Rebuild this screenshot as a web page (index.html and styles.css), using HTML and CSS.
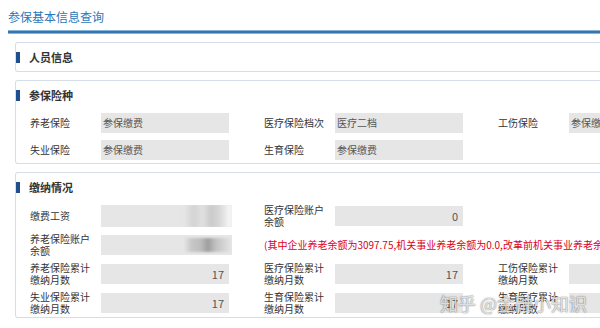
FILE: index.html
```html
<!DOCTYPE html>
<html lang="zh">
<head>
<meta charset="utf-8">
<link rel="stylesheet" href="styles.css">
</head>
<body>
<div class="page">
  <div class="page-title">参保基本信息查询</div>
  <div class="title-line"></div>

  <div class="panel panel-first">
    <div class="panel-head"><span class="marker"></span>人员信息</div>
  </div>

  <div class="panel">
    <div class="panel-head"><span class="marker"></span>参保险种</div>
    <div class="row">
      <div class="field"><span class="label">养老保险</span><span class="input">参保缴费</span></div>
      <div class="field"><span class="label">医疗保险档次</span><span class="input">医疗二档</span></div>
      <div class="field"><span class="label">工伤保险</span><span class="input">参保缴费</span></div>
    </div>
    <div class="row">
      <div class="field"><span class="label">失业保险</span><span class="input">参保缴费</span></div>
      <div class="field"><span class="label">生育保险</span><span class="input">参保缴费</span></div>
    </div>
  </div>

  <div class="panel">
    <div class="panel-head"><span class="marker"></span>缴纳情况</div>
    <div class="row tall">
      <div class="field"><span class="label">缴费工资</span><span class="input wide tallbox blurred"><span class="blur b1"></span></span></div>
      <div class="field"><span class="label two">医疗保险账户<br>余额</span><span class="input num">0</span></div>
    </div>
    <div class="row tall">
      <div class="field"><span class="label two">养老保险账户<br>余额</span><span class="input wide blurred"><span class="blur b2"></span></span></div>
      <div class="note">(其中企业养老余额为3097.75,机关事业养老余额为0.0,改革前机关事业养老余额为0.0)</div>
    </div>
    <div class="row tall">
      <div class="field"><span class="label two">养老保险累计<br>缴纳月数</span><span class="input num">17</span></div>
      <div class="field"><span class="label two">医疗保险累计<br>缴纳月数</span><span class="input num">17</span></div>
      <div class="field"><span class="label two">工伤保险累计<br>缴纳月数</span><span class="input num">17</span></div>
    </div>
    <div class="row tall">
      <div class="field"><span class="label two">失业保险累计<br>缴纳月数</span><span class="input num">17</span></div>
      <div class="field"><span class="label two">生育保险累计<br>缴纳月数</span><span class="input num">17</span></div>
      <div class="field"><span class="label two">生育医疗累计<br>缴纳月数</span><span class="input num"></span></div>
    </div>
  </div>
  <div class="watermark">知乎 @金融小知识</div>
</div>
</body>
</html>
```

FILE: styles.css
```css
html, body {
  margin: 0;
  padding: 0;
  background: #fff;
  overflow: hidden;
}
body {
  font-family: "Noto Sans CJK SC", "Liberation Sans", sans-serif;
  font-size: 10px;
  color: #333;
  width: 600px;
  height: 328px;
}
.page {
  position: relative;
  width: 600px;
  overflow: hidden;
}
.page-title {
  box-sizing: border-box;
  height: 30px;
  line-height: 30px;
  padding: 2px 0 0 8px;
  font-size: 12px;
  color: #2b78b8;
}
.title-line {
  margin-left: 8px;
  height: 4px;
  background: linear-gradient(#a9d1ef, #2f6fa9 40%, #2f6fa9 60%, #a9d1ef);
}
.panel {
  margin: 8px 0 0 15px;
  border: 1px solid #dcdcdc;
  border-top-color: #d4dde8;
  border-radius: 3px;
  width: 720px;
}
.panel-head {
  height: 28px;
  display: flex;
  align-items: center;
  font-size: 11px;
  font-weight: bold;
  color: #333;
}
.marker {
  width: 4px;
  height: 11px;
  background: #1f4f8f;
  margin-right: 9px;
}
.row {
  display: flex;
  align-items: center;
  height: 27px;
  padding-left: 14px;
}
.row.tall {
  height: 29px;
}
.panel:last-of-type {
  padding-bottom: 1px;
}
.field {
  display: flex;
  align-items: center;
  width: 234px;
  flex: none;
}
.label {
  width: 71px;
  flex: none;
  color: #333;
  line-height: 12px;
}
.input {
  width: 128px;
  height: 20px;
  background: #e6e6e6;
  color: #555;
  line-height: 20px;
  padding: 0 2px;
  box-sizing: border-box;
  position: relative;
  overflow: hidden;
}
.input.wide {
  width: 131px;
}
.input.tallbox {
  height: 22px;
}
.input.num {
  text-align: right;
  padding-right: 5px;
  font-size: 11px;
}
.blur {
  position: absolute;
  top: -2px;
  bottom: -2px;
  right: 0;
  width: 48px;
  filter: blur(2px);
}
.b1 {
  background: linear-gradient(90deg, #e6e6e6 0%, #d2d2d2 20%, #e2e2e2 40%, #c8c8c8 55%, #d8d8d8 75%, #fff 100%);
}
.b2 {
  background: linear-gradient(90deg, #e6e6e6 0%, #c8c8c8 15%, #bdbdbd 35%, #9e9e9e 50%, #c0c0c0 65%, #d6d6d6 85%, #e6e6e6 100%);
  filter: blur(1px);
  top: 3px;
  bottom: 3px;
}
.note {
  color: #d9001b;
  white-space: nowrap;
  font-size: 10px;
}
.watermark {
  position: absolute;
  left: 440px;
  top: 290px;
  font-size: 18px;
  color: rgba(255, 255, 255, 0.8);
  text-shadow: 0 0 1px rgba(0, 0, 0, 0.55), 0 0 2px rgba(0, 0, 0, 0.25);
  white-space: nowrap;
}
```
